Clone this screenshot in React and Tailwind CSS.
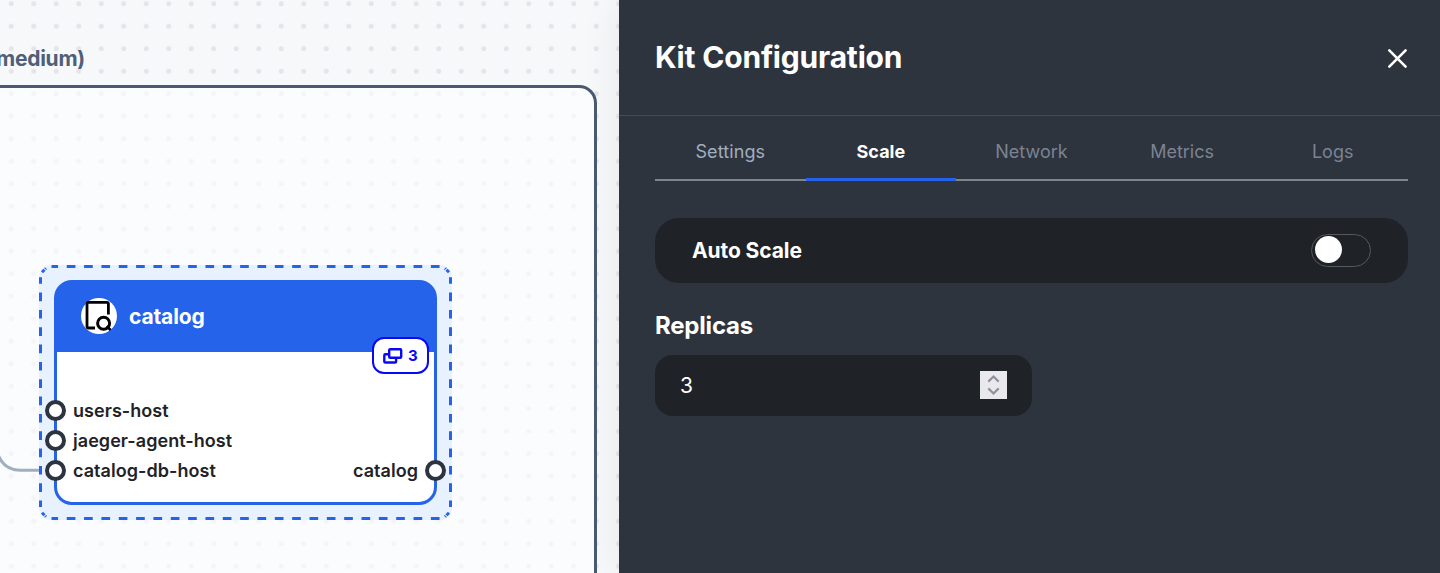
import React from "react";

const tabs = [
  { label: "Settings", style: "text-[#a0aec0] tracking-[0.1px]" },
  { label: "Scale", style: "font-bold text-white", active: true },
  { label: "Network", style: "text-[#7b8394]" },
  { label: "Metrics", style: "text-[#7b8394]" },
  { label: "Logs", style: "text-[#7b8394]" },
];

function Dots() {
  return (
    <svg className="absolute inset-0 h-full w-full">
      <defs>
        <pattern id="dots" width="22.5" height="22.5" patternUnits="userSpaceOnUse" x="0" y="-7.6">
          <circle cx="11.25" cy="11.25" r="2.5" fill="#e4e5ea" />
        </pattern>
      </defs>
      <rect width="100%" height="100%" fill="url(#dots)" />
    </svg>
  );
}

function SelectionOutline() {
  return (
    <svg className="absolute inset-0" width="413" height="255" fill="none" stroke="#2563eb" strokeWidth="3">
      <path d="M12.5 1.5H401.5M12.5 253.5H401.5" strokeDasharray="8.67 8.67" strokeDashoffset="2.1" />
      <path d="M1.5 12.3V242M411.5 12.3V242" strokeDasharray="8.67 8.67" strokeDashoffset="2.1" />
      <path d="M3 7.2L7 3.2M410 7.2L406 3.2M3 247.8L7 251.8M410 247.8L406 251.8" strokeDasharray="3.5 1 2" />
    </svg>
  );
}

function Port({ className }) {
  return <span className={`mb-px h-[21px] w-[21px] shrink-0 rounded-full border-4 border-[#2d343f] bg-white ${className}`} />;
}

function CatalogNode() {
  return (
    <div className="absolute left-[39px] top-[265px] h-[255px] w-[413px] rounded-xl bg-[#e8f2ff] p-[15px]">
      <SelectionOutline />
      <div className="relative flex h-[225px] w-[383px] flex-col rounded-[18px] border-[3px] border-[#2563eb] bg-white">
        <div className="-mx-px -mt-px flex h-[70px] items-center gap-3 rounded-t-[15px] bg-[#2563eb] pl-[25px] pb-0.5">
          <svg width="36" height="36" viewBox="0 0 36 36" fill="none" stroke="#000">
            <circle cx="18" cy="18" r="18" fill="#fff" stroke="none" />
            <path d="M27.4 16.5V6Q27.4 4.4 25.8 4.4H7.6Q6 4.4 6 6V28.4Q6 30 7.6 30H14" strokeWidth="2.8" />
            <circle cx="22.6" cy="25.2" r="6" strokeWidth="3" />
            <path d="M25.5 28.3L29.6 32" strokeWidth="2.8" />
          </svg>
          <span className="pt-0.5 text-[21px] font-bold leading-7 tracking-[-0.15px] text-white">catalog</span>
        </div>
        <div className="absolute right-[5px] top-[54px] flex h-[37px] w-[57px] items-center rounded-xl border-2 border-[#0808f5] bg-white pl-[9px] text-[#0808f5]">
          <svg width="20" height="16" viewBox="0 0 20 16" fill="none" stroke="currentColor" strokeWidth="2.4">
            <rect x="6.2" y="1.3" width="12" height="8.5" rx="1" />
            <path d="M6 6.3H2.4Q1.3 6.3 1.3 7.4V13.4Q1.3 14.5 2.4 14.5H12Q13.1 14.5 13.1 13.4V9.8" />
          </svg>
          <span className="ml-[5px] text-[15px] font-bold leading-5">3</span>
        </div>
        <div className="mt-[44px] flex flex-col text-lg font-semibold leading-[30px] tracking-[0.05px] text-[#1f2226]">
          <div className="flex items-center"><Port className="-ml-3 mr-[7px]" />users-host</div>
          <div className="flex items-center"><Port className="-ml-3 mr-[7px]" />jaeger-agent-host</div>
          <div className="flex items-center justify-between">
            <span className="flex items-center"><Port className="-ml-3 mr-[7px]" />catalog-db-host</span>
            <span className="flex items-center">catalog<Port className="-mr-3 ml-[7px]" /></span>
          </div>
        </div>
      </div>
    </div>
  );
}

function Panel() {
  return (
    <aside className="relative flex h-full w-[821px] shrink-0 flex-col bg-[#2d343e] text-white shadow-[0_0_38px_rgba(0,0,0,0.07)]">
      <header className="flex h-[116px] items-center justify-between border-b border-[#434a54] pl-9 pr-8">
        <h1 className="pb-0.5 text-[30px] font-bold leading-9 tracking-[-0.2px]">Kit Configuration</h1>
        <svg className="mt-px" width="22" height="22" viewBox="0 0 22 22" fill="none" stroke="#fff" strokeWidth="2.6" strokeLinecap="round">
          <path d="M3.3 3.3L19.6 19.6M19.6 3.3L3.3 19.6" />
        </svg>
      </header>
      <div className="flex flex-col pl-9 pr-8">
        <nav className="flex h-[65px] border-b-2 border-[#80848e]">
          {tabs.map((t) => (
            <div
              key={t.label}
              className={`-mb-0.5 flex flex-1 justify-center pt-[22px] text-lg leading-7 ${t.style} ${t.active ? "border-b-[3px] border-[#2563eb]" : ""}`}
            >
              {t.label}
            </div>
          ))}
        </nav>
        <div className="mt-[37px] flex h-[65px] items-center justify-between rounded-3xl bg-[#1f2226] px-[37px]">
          <span className="text-[21px] font-bold tracking-[-0.1px]">Auto Scale</span>
          <span className="flex h-[33px] w-[60px] items-center rounded-full border border-[#55585d] pb-0.5 pl-[3px]">
            <span className="h-[27px] w-[27px] rounded-full bg-white" />
          </span>
        </div>
        <h2 className="mt-[27px] text-2xl font-bold leading-8 tracking-[-0.2px]">Replicas</h2>
        <div className="mt-[13px] flex h-[61px] w-[377px] items-center justify-between rounded-[18px] bg-[#1f2226] pl-[25px] pr-[25px]">
          <span className="text-[21px]">3</span>
          <svg className="mb-px" width="27" height="28" viewBox="0 0 27 28" fill="none" stroke="#9090a0" strokeWidth="2.2">
            <rect width="27" height="28" fill="#e9e9ed" stroke="none" />
            <path d="M8.3 10.6L13.5 5.5L18.7 10.6M8.3 17.4L13.5 22.5L18.7 17.4" />
          </svg>
        </div>
      </div>
    </aside>
  );
}

export default function App() {
  return (
    <div className="flex h-[573px] w-[1440px] overflow-hidden font-['Inter',sans-serif]">
      <main className="relative h-full flex-1 bg-[#f7f8fa]">
        <Dots />
        <div className="absolute -left-[500px] top-[85px] h-[600px] w-[1097px] rounded-[18px] border-[3px] border-[#4a5a70] bg-[#fdfeff]/65" />
        <span className="absolute right-[534px] top-[45px] whitespace-nowrap text-[21px] font-bold leading-7 tracking-[-0.25px] text-[#4f5f78]">medium)</span>
        <svg className="absolute left-0 top-[440px]" width="50" height="40" fill="none" stroke="#a0aec0" strokeWidth="3">
          <path d="M-3 11Q2 30.3 21 30.3H50" />
        </svg>
        <CatalogNode />
      </main>
      <Panel />
    </div>
  );
}
